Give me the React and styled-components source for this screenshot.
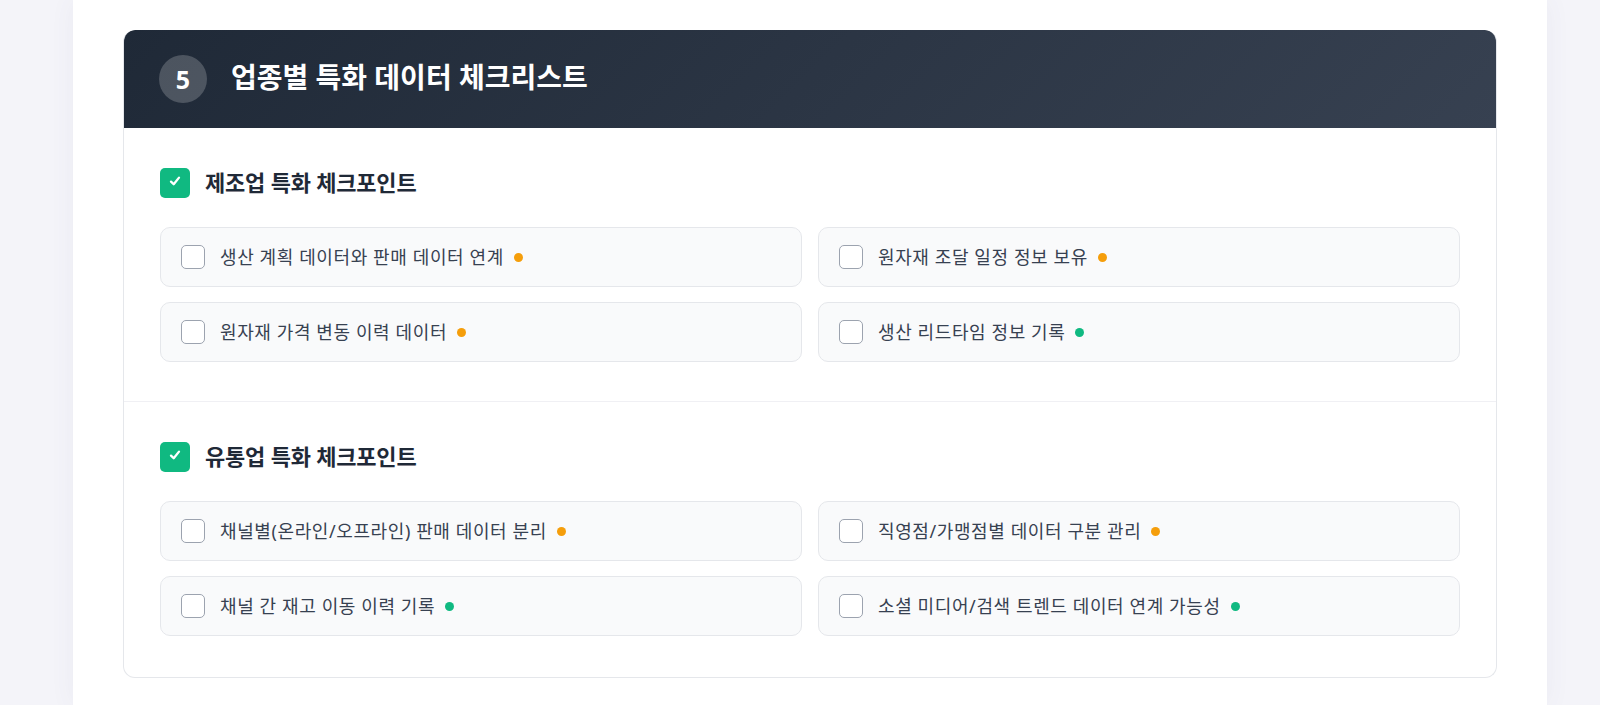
import React from "react";
import styled, { createGlobalStyle } from "styled-components";

const COLORS = {
  page: "#f4f4f9",
  text: "#374151",
  title: "#1f2937",
  border: "#e5e7eb",
  itemBg: "#f9fafb",
  orange: "#f59e0b",
  green: "#10b981",
};

const sections = [
  {
    title: "제조업 특화 체크포인트",
    items: [
      { label: "생산 계획 데이터와 판매 데이터 연계", level: "high" },
      { label: "원자재 조달 일정 정보 보유", level: "high" },
      { label: "원자재 가격 변동 이력 데이터", level: "high" },
      { label: "생산 리드타임 정보 기록", level: "low" },
    ],
  },
  {
    title: "유통업 특화 체크포인트",
    items: [
      { label: "채널별(온라인/오프라인) 판매 데이터 분리", level: "high" },
      { label: "직영점/가맹점별 데이터 구분 관리", level: "high" },
      { label: "채널 간 재고 이동 이력 기록", level: "low" },
      { label: "소셜 미디어/검색 트렌드 데이터 연계 가능성", level: "low" },
    ],
  },
];

const GlobalStyles = createGlobalStyle`
  html, body {
    margin: 0;
    padding: 0;
    background: ${COLORS.page};
    font-family: "Noto Sans", "Noto Sans CJK KR", sans-serif;
  }
`;

const App = () => {
  return (
    <Page>
      <GlobalStyles />
      <Container>
        <Card>
          <Header>
            <StepBadge>5</StepBadge>
            <HeaderTitle>업종별 특화 데이터 체크리스트</HeaderTitle>
          </Header>
          {sections.map((section) => (
            <Section key={section.title}>
              <SectionHead>
                <SectionCheck>
                  <svg width="14" height="14" viewBox="0 0 14 14">
                    <path
                      d="M3 7.6 L5.7 10.3 L11 3.6"
                      fill="none"
                      stroke="#ffffff"
                      strokeWidth="2.3"
                      strokeLinecap="round"
                      strokeLinejoin="round"
                    />
                  </svg>
                </SectionCheck>
                <SectionTitle>{section.title}</SectionTitle>
              </SectionHead>
              <ItemGrid>
                {section.items.map((item) => (
                  <Item key={item.label}>
                    <Box />
                    <ItemLabel>{item.label}</ItemLabel>
                    <Dot $level={item.level} />
                  </Item>
                ))}
              </ItemGrid>
            </Section>
          ))}
        </Card>
      </Container>
    </Page>
  );
};

const Page = styled.div`
  min-height: 705px;
  padding-left: 73px;
`;

const Container = styled.div`
  width: 1474px;
  min-height: 705px;
  background: #ffffff;
  box-shadow: 0 0 24px rgba(80, 80, 140, 0.06);
  padding: 30px 50px 28px;
  box-sizing: border-box;
`;

const Card = styled.section`
  border: 1px solid ${COLORS.border};
  border-top: none;
  border-radius: 12px;
  overflow: hidden;
  background: #ffffff;
`;

const Header = styled.header`
  display: flex;
  align-items: center;
  gap: 24px;
  height: 98px;
  padding: 0 36px;
  margin: 0 -1px;
  background: linear-gradient(135deg, #1f2937 0%, #374151 100%);
  border-radius: 12px 12px 0 0;
`;

const StepBadge = styled.div`
  width: 48px;
  height: 48px;
  border-radius: 50%;
  background: rgba(255, 255, 255, 0.2);
  color: #ffffff;
  font-size: 25px;
  font-weight: 700;
  display: flex;
  align-items: center;
  justify-content: center;
`;

const HeaderTitle = styled.h2`
  margin: 0 0 6px;
  color: #ffffff;
  font-size: 28px;
  font-weight: 700;
  letter-spacing: 0;
`;

const Section = styled.div`
  padding: 40px 36px 39px;
  & + & {
    border-top: 1px solid #f0f0f4;
    padding-bottom: 41px;
  }
`;

const SectionHead = styled.div`
  display: flex;
  align-items: center;
  gap: 15px;
  height: 30px;
  margin-bottom: 29px;
`;

const SectionCheck = styled.span`
  width: 30px;
  height: 30px;
  border-radius: 5px;
  background: ${COLORS.green};
  display: flex;
  align-items: center;
  justify-content: center;
  padding-bottom: 4px;
  box-sizing: border-box;
`;

const SectionTitle = styled.h3`
  margin: 0 0 4px;
  font-size: 22px;
  font-weight: 700;
  color: ${COLORS.title};
  letter-spacing: -0.2px;
`;

const ItemGrid = styled.div`
  display: grid;
  grid-template-columns: 1fr 1fr;
  gap: 15px 16px;
`;

const Item = styled.label`
  display: flex;
  align-items: center;
  height: 60px;
  padding: 0 20px;
  box-sizing: border-box;
  background: ${COLORS.itemBg};
  border: 1px solid ${COLORS.border};
  border-radius: 10px;
`;

const Box = styled.span`
  width: 24px;
  height: 24px;
  border: 1.5px solid #9ca3af;
  border-radius: 5px;
  background: #ffffff;
  box-sizing: border-box;
  flex-shrink: 0;
`;

const ItemLabel = styled.span`
  margin: 0 0 2px 15px;
  font-size: 18px;
  color: ${COLORS.text};
  letter-spacing: 0.6px;
`;

const Dot = styled.span`
  width: 9px;
  height: 9px;
  border-radius: 50%;
  margin-left: 10px;
  flex-shrink: 0;
  background: ${(p) => (p.$level === "high" ? COLORS.orange : COLORS.green)};
`;

export default App;
